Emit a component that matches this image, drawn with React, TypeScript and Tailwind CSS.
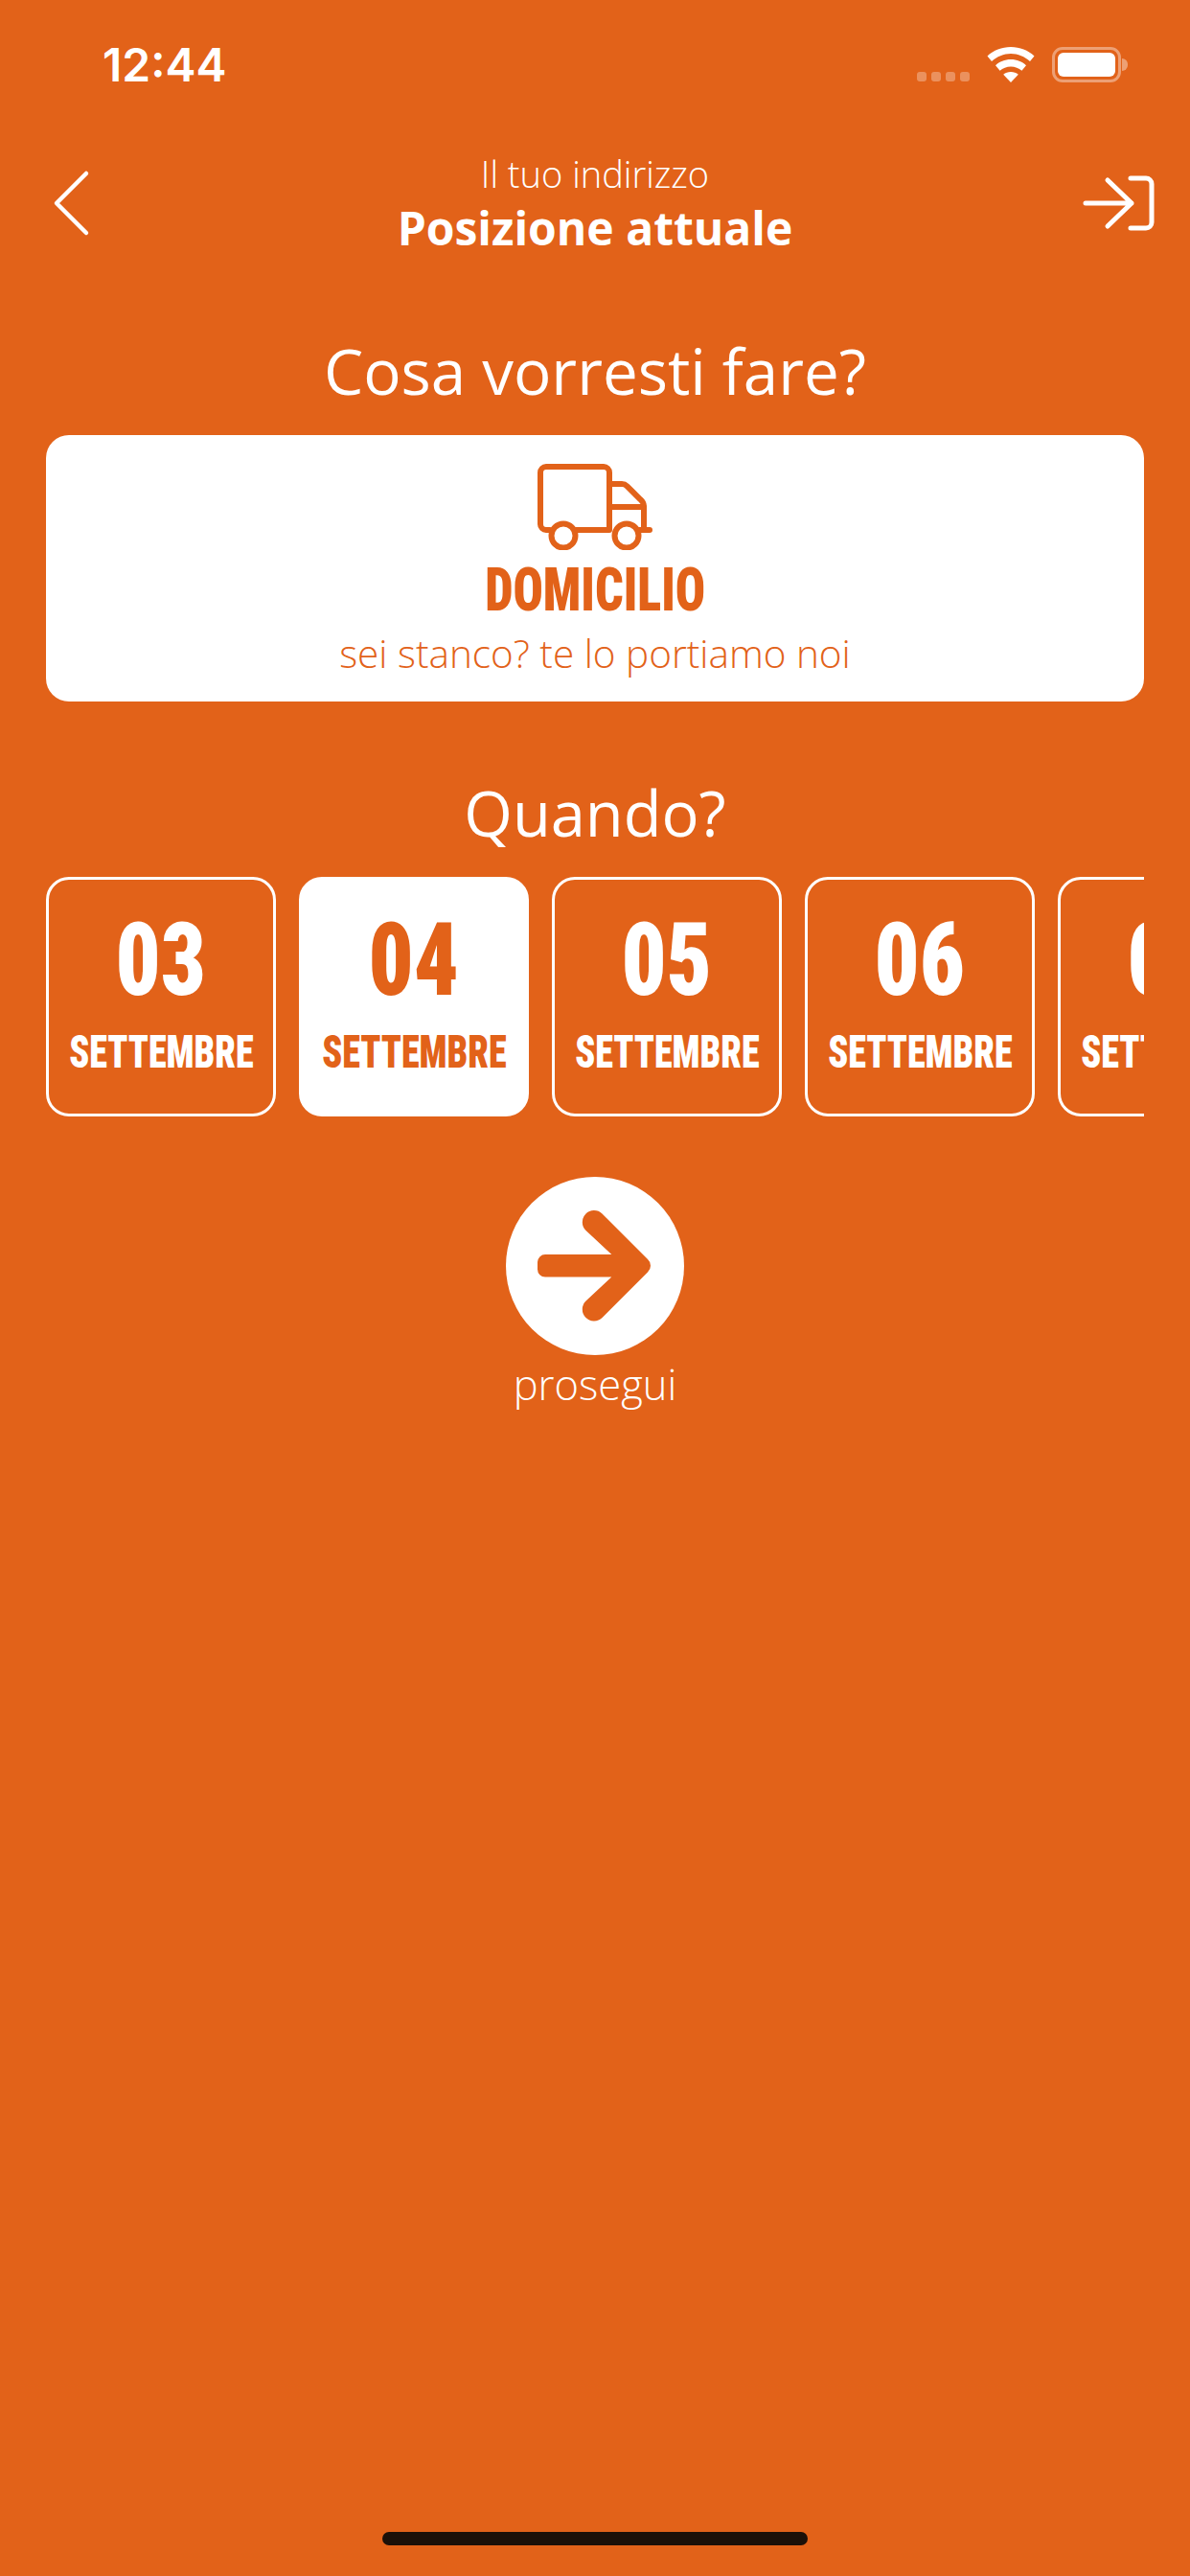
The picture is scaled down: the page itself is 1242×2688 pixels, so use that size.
import React from 'react';

const days = ['03', '04', '05', '06', '07'];
const condensed = "font-['Liberation_Sans_Narrow','Roboto_Condensed','Liberation_Sans',sans-serif] font-black whitespace-nowrap";

const StatusBar: React.FC = () => (
  <div className="flex items-start h-[160px] pl-[107px] pr-[65px] pt-[44px]">
    <span className="font-['Inter',sans-serif] text-[48px] font-semibold leading-[48px] text-white">12:44</span>
    <div className="ml-auto flex items-end pt-[5px]">
      <div className="flex gap-[5px] mb-[1px]">
        {[0, 1, 2, 3].map((i) => (
          <span key={i} className="w-[10px] h-[10px] rounded-[3px] bg-white/30" />
        ))}
      </div>
      <svg className="ml-[18px]" width="50" height="37" viewBox="0 0 50 37" fill="white">
        <path d="M25 0C15.500 0 7 3.500 .5 9.500l4.500 5.500C10.500 10 17.500 7 25 7s14.500 3 20 8l4.500-5.500C43 3.500 34.500 0 25 0z" />
        <path d="M25 13c-6.300 0-11.800 2.300-16 6.200l4.600 5.500c3-2.700 7-4.300 11.400-4.300s8.400 1.600 11.400 4.300l4.600-5.500C36.800 15.300 31.300 13 25 13z" />
        <path d="M25 26c-3 0-5.700 1-7.800 2.800L25 37l7.800-8.200C30.700 27 28 26 25 26z" />
      </svg>
      <div className="ml-[18px] flex items-center">
        <div className="w-[72px] h-[37px] rounded-[11px] border-[3px] border-white/40 p-[3px]">
          <div className="w-full h-full rounded-[6px] bg-white" />
        </div>
        <span className="ml-[1px] w-[6px] h-[13px] rounded-r-full bg-white/40" />
      </div>
    </div>
  </div>
);

const Header: React.FC = () => (
  <div className="grid grid-cols-[1fr_auto_1fr] items-start px-[34px]">
    <svg className="mt-[16px] ml-[20px]" width="40" height="72" viewBox="0 0 40 72" fill="none" stroke="white" strokeWidth="4.500" strokeLinecap="round" strokeLinejoin="round">
      <path d="M36 5 5 36l31 31" />
    </svg>
    <div className="flex flex-col items-center font-['Open_Sans',sans-serif] text-white">
      <span className="text-[38px] font-light leading-[43px]">Il tuo indirizzo</span>
      <span className="text-[48px] font-bold leading-[70px]">Posizione attuale</span>
    </div>
    <svg className="mt-[20px] justify-self-end" width="80" height="64" viewBox="0 0 80 64" fill="none" stroke="white" strokeWidth="5" strokeLinecap="round" strokeLinejoin="round">
      <path d="M5 32h48M28 8l25 24-25 24M52 6h16a6 6 0 0 1 6 6v40a6 6 0 0 1-6 6H52" />
    </svg>
  </div>
);

const TruckIcon: React.FC = () => (
  <svg width="120" height="90" viewBox="0 0 120 90" fill="none" stroke="#E26219" strokeWidth="6" strokeLinecap="round" strokeLinejoin="round">
    <path d="M13 69H9a6 6 0 0 1-6-6V9a6 6 0 0 1 6-6h60a6 6 0 0 1 6 6v60M40 69h35" />
    <path d="M75 21h13a8 8 0 0 1 5.500 2.300l14 14a10 10 0 0 1 3.500 6.700v25M75 45h36M106 69h11" />
    <circle cx="27" cy="75" r="12.500" />
    <circle cx="93" cy="75" r="12.500" />
  </svg>
);

const App: React.FC = () => {
  return (
    <div className="w-[1242px] h-[2688px] bg-[#E26219] flex flex-col font-['Open_Sans',sans-serif] text-white overflow-hidden">
      <StatusBar />
      <Header />

      <h2 className="mt-[70px] text-center text-[65.500px] font-medium leading-[88px]">Cosa vorresti fare?</h2>

      <div className="mx-[48px] mt-[23px] h-[278px] rounded-[24px] bg-white flex flex-col items-center pt-[30px] text-[#E26219]">
        <TruckIcon />
        <span className={`${condensed} mt-[7px] text-[63px] leading-[70px] scale-x-[0.826]`}>DOMICILIO</span>
        <span className="text-[40.500px] font-light leading-[54px] mt-[4px]">sei stanco? te lo portiamo noi</span>
      </div>

      <h2 className="mt-[72px] text-center text-[65px] font-normal leading-[88px]">Quando?</h2>

      <div className="ml-[48px] mt-[23px] w-[1146px] flex gap-[24px] overflow-hidden">
        {days.map((day) => (
          <div
            key={day}
            className={`shrink-0 w-[240px] h-[250px] rounded-[24px] border-[3px] border-white flex flex-col items-center ${day === '04' ? 'bg-white text-[#E26219]' : ''}`}
          >
            <span className={`${condensed} mt-[30px] text-[105px] leading-[110px] scale-x-[0.88]`}>{day}</span>
            <span className={`${condensed} mt-[15px] text-[49px] leading-[50px] scale-x-[0.78]`}>SETTEMBRE</span>
          </div>
        ))}
      </div>

      <div className="mt-[63px] flex flex-col items-center">
        <div className="w-[186px] h-[186px] rounded-full bg-white">
          <svg width="186" height="186" viewBox="0 0 186 186" fill="#E26219">
            <path d="M41 81h69.300L83.500 56a12 12 0 0 1 17-17.500L148 86a9 9 0 0 1 0 13.400L100.500 147a12 12 0 0 1-17-17.500l26.800-25H41a8 8 0 0 1-8-8v-7.400a8 8 0 0 1 8-8z" />
          </svg>
        </div>
        <span className="text-[43.500px] font-light leading-[54px] mt-[4px]">prosegui</span>
      </div>

      <div className="mt-auto mb-[32px] mx-auto w-[444px] h-[14px] rounded-full bg-[#1c1008]" />
    </div>
  );
};

export default App;
